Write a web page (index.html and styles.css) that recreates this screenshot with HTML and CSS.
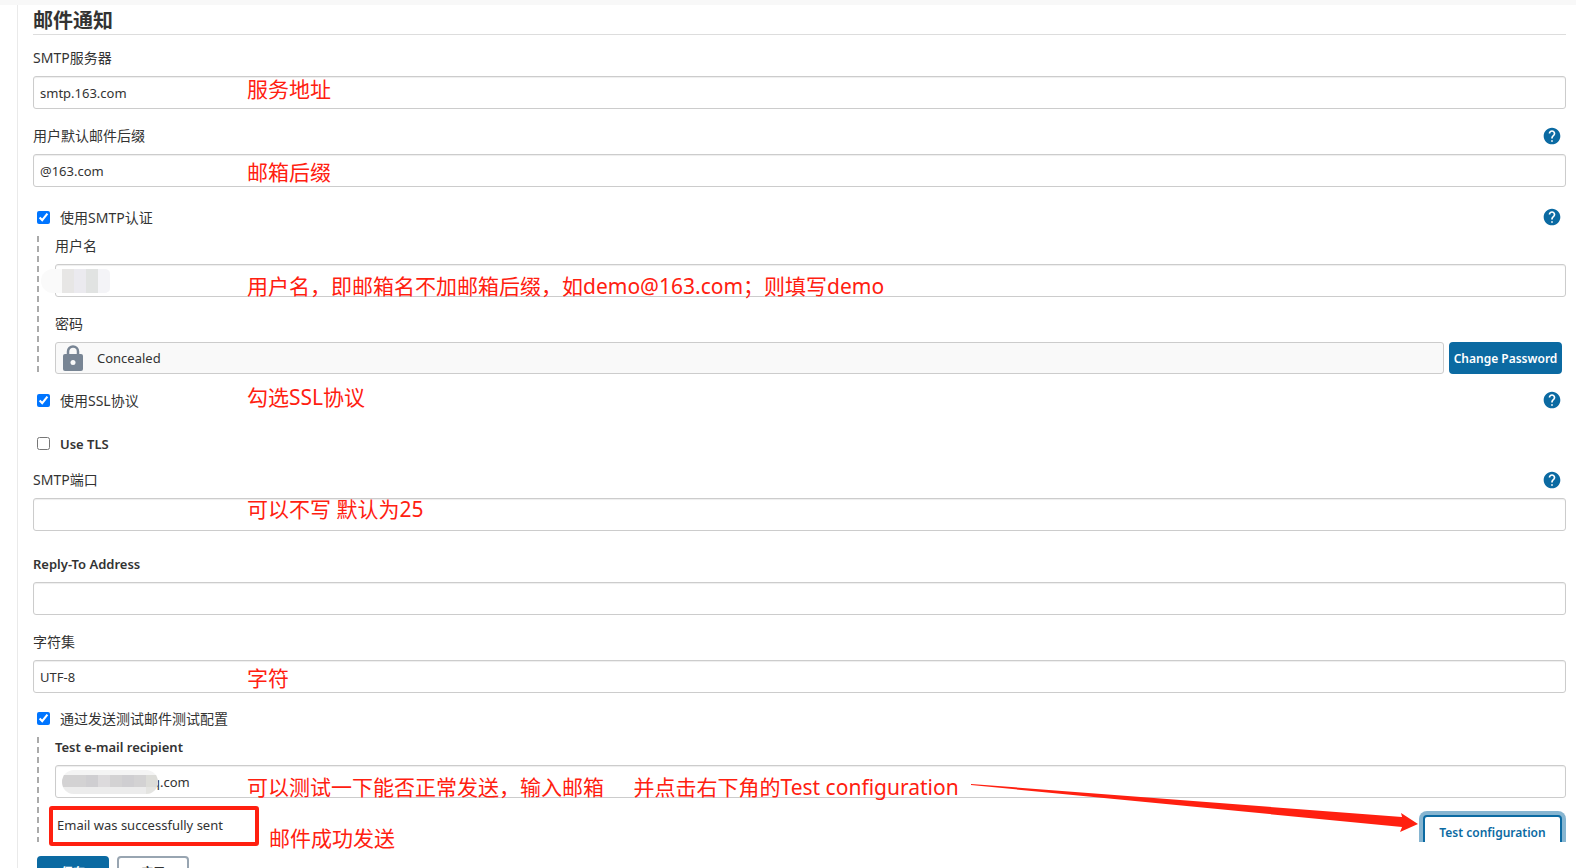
FILE: index.html
```
<!DOCTYPE html>
<html lang="zh-CN">
<head>
    <meta charset="UTF-8">
    <meta name="viewport" content="width=device-width, initial-scale=1.0">
    <title>邮件通知</title>
    <link rel="stylesheet" href="styles.css">
</head>
<body>

<svg class="sprite" aria-hidden="true">
    <symbol id="icon-help" viewBox="0 0 24 24">
        <path d="M12 2C6.48 2 2 6.48 2 12s4.48 10 10 10 10-4.48 10-10S17.52 2 12 2zm1 17h-2v-2h2v2zm2.07-7.75l-.9.92C13.45 12.9 13 13.5 13 15h-2v-.5c0-1.1.45-2.1 1.17-2.83l1.24-1.26c.37-.36.59-.86.59-1.41 0-1.1-.9-2-2-2s-2 .9-2 2H8c0-2.21 1.79-4 4-4s4 1.79 4 4c0 .88-.36 1.68-.93 2.25z"/>
    </symbol>
</svg>

<div class="topbar"></div>

<form class="config">
    <h2>邮件通知</h2>

    <div class="field">
        <div class="label-row"><label for="smtp-server">SMTP服务器</label></div>
        <input type="text" id="smtp-server" value="smtp.163.com">
        <span class="note">服务地址</span>
    </div>

    <div class="field">
        <div class="label-row">
            <label for="suffix">用户默认邮件后缀</label>
            <a class="help" href="#" aria-label="Help"><svg><use href="#icon-help"/></svg></a>
        </div>
        <input type="text" id="suffix" value="@163.com">
        <span class="note note-mid">邮箱后缀</span>
    </div>

    <div class="check-row">
        <input type="checkbox" id="use-auth" checked>
        <label for="use-auth">使用SMTP认证</label>
        <a class="help" href="#" aria-label="Help"><svg><use href="#icon-help"/></svg></a>
    </div>

    <div class="nested">
        <div class="field">
            <div class="label-row"><label for="username">用户名</label></div>
            <input type="text" id="username">
            <span class="mask mask-user"><i></i><i></i><i></i><i></i></span>
            <span class="note note-low">用户名，即邮箱名不加邮箱后缀，如demo@163.com；则填写demo</span>
        </div>
        <div class="field">
            <div class="label-row"><span>密码</span></div>
            <div class="secret-row">
                <div class="secret">
                    <svg viewBox="0 0 20 26">
                        <path d="M5 10V6.500a5 5 0 0 1 10 0V10" fill="none" stroke="#788594" stroke-width="2.500"/>
                        <rect x="0" y="9" width="20" height="17" rx="2" fill="#788594"/>
                        <circle cx="10" cy="17.500" r="2.500" fill="#f9f9f9"/>
                    </svg>
                    <span>Concealed</span>
                </div>
                <button type="button" class="btn-primary">Change Password</button>
            </div>
        </div>
    </div>

    <div class="check-row">
        <input type="checkbox" id="use-ssl" checked>
        <label for="use-ssl">使用SSL协议</label>
        <a class="help" href="#" aria-label="Help"><svg><use href="#icon-help"/></svg></a>
        <span class="note">勾选SSL协议</span>
    </div>

    <div class="check-row">
        <input type="checkbox" id="use-tls">
        <label for="use-tls" class="latin">Use TLS</label>
    </div>

    <div class="field field-port">
        <div class="label-row">
            <label for="port">SMTP端口</label>
            <a class="help" href="#" aria-label="Help"><svg><use href="#icon-help"/></svg></a>
        </div>
        <input type="text" id="port">
        <span class="note note-high">可以不写 默认为25</span>
    </div>

    <div class="field">
        <div class="label-row"><label for="reply-to" class="latin">Reply-To Address</label></div>
        <input type="text" id="reply-to">
    </div>

    <div class="field field-charset">
        <div class="label-row"><label for="charset">字符集</label></div>
        <input type="text" id="charset" value="UTF-8">
        <span class="note note-mid">字符</span>
    </div>

    <div class="check-row">
        <input type="checkbox" id="send-test" checked>
        <label for="send-test">通过发送测试邮件测试配置</label>
    </div>

    <div class="nested nested-test">
        <div class="field">
            <div class="label-row"><label for="recipient" class="latin">Test e-mail recipient</label></div>
            <input type="text" id="recipient" class="recipient" value="q.com">
            <span class="mask mask-mail"><i></i><i></i><i></i><i></i><i></i><i></i><i></i><i></i></span>
            <span class="note note-low">可以测试一下能否正常发送，输入邮箱 <span class="note-next">并点击右下角的Test configuration</span></span>
        </div>
        <div class="result-row">
            <span class="result">Email was successfully sent</span>
            <span class="note">邮件成功发送</span>
            <div class="test-clip">
                <button type="button" class="btn-test">Test configuration</button>
            </div>
        </div>
        <svg class="arrow" viewBox="0 0 448 50" preserveAspectRatio="none">
            <path d="M0 0L432 33L431 29L448 40L430 48L432 43L0 1Z" fill="#ff2010"/>
        </svg>
    </div>

    <div class="actions">
        <button type="submit" class="btn-save">保存</button>
        <button type="button" class="btn-apply">应用</button>
    </div>
</form>

</body>
</html>
```
FILE: styles.css
```
* {
    box-sizing: border-box;
}
html {
    overflow: hidden;
}
body {
    margin: 0;
    background: #fff;
    color: #333;
    font-family: "Noto Sans", "Noto Sans CJK SC", sans-serif;
    font-size: 14px;
    line-height: 20px;
}
.sprite {
    display: none;
}
.topbar {
    height: 5px;
    background: #f8f8f8;
}
.config {
    margin-left: 17px;
    padding: 0 10px 0 15px;
    border-left: 1px solid #eaeaea;
}
h2 {
    margin: 0 0 13px;
    height: 30px;
    line-height: 32px;
    border-bottom: 1px solid #ddd;
    font-size: 20px;
    font-weight: 700;
}

/* fields */
.field {
    position: relative;
    margin-bottom: 17px;
}
.field-port {
    margin-bottom: 23px;
}
.label-row {
    display: flex;
    align-items: center;
    justify-content: space-between;
    height: 20px;
    margin-bottom: 8px;
}
.latin {
    font-size: 13px;
    font-weight: 600;
}
input[type="text"] {
    display: block;
    width: 100%;
    height: 33px;
    padding: 0 6px;
    border: 1px solid #ccc;
    border-radius: 3px;
    box-shadow: inset 0 1px 1px rgba(0, 0, 0, 0.07);
    background: #fff;
    color: #333;
    font-family: inherit;
    font-size: 13px;
}
input.recipient {
    padding-left: 96px;
}
.check-row {
    position: relative;
    display: flex;
    align-items: center;
    height: 20px;
    margin: 0 0 23px 4px;
}
.check-row label {
    padding-top: 2px;
}
.field + .check-row {
    margin-top: 20px;
}
.field-charset {
    margin-bottom: 15px;
}
.field-charset + .check-row {
    margin-top: 0;
}
.check-row:has(+ .nested) {
    margin-bottom: 9px;
}
.check-row:has(+ .field) {
    margin-bottom: 17px;
}
input[type="checkbox"] {
    width: 13px;
    height: 13px;
    margin: 0 10px 0 0;
}
.help {
    display: flex;
    margin: 0 4px 0 auto;
    color: #0b6aa2;
}
.help svg {
    width: 20px;
    height: 20px;
    fill: currentColor;
}

/* block shown under a ticked box */
.nested {
    position: relative;
    margin: 0 0 16px 4px;
    padding-left: 18px;
}
.nested::before {
    content: "";
    position: absolute;
    left: 0;
    top: 0;
    bottom: 0;
    width: 2px;
    background: repeating-linear-gradient(#aaa 0 6px, transparent 6px 10px);
}
.nested .field:last-child {
    margin-bottom: 0;
}
.nested-test {
    margin-bottom: 14px;
}
.secret-row {
    display: flex;
    gap: 5px;
    height: 32px;
    margin-right: 4px;
}
.secret {
    display: flex;
    flex: 1;
    align-items: center;
    gap: 14px;
    padding: 0 7px;
    border: 1px solid #ccc;
    border-radius: 3px;
    background: #f9f9f9;
    font-size: 13px;
}
.secret svg {
    width: 20px;
    height: 26px;
}

/* buttons */
button {
    border: 2px solid #0b6aa2;
    border-radius: 4px;
    font-family: inherit;
    font-size: 12px;
    font-weight: 600;
}
.btn-primary {
    width: 113px;
    padding: 0;
    background: #0b6aa2;
    color: #fff;
    white-space: nowrap;
}
.test-clip {
    height: 31px;
    margin: 5px 0 0 auto;
    padding: 4px 4px 0;
    overflow: hidden;
}
.btn-test {
    width: 139px;
    height: 34px;
    padding: 0;
    background: #fff;
    box-shadow: 0 0 0 4px #86b5d1;
    color: #0b6aa2;
}
.actions {
    display: flex;
    gap: 8px;
    margin-left: 4px;
}
.actions button {
    width: 72px;
    height: 32px;
}
.btn-save {
    background: #0b6aa2;
    color: #fff;
}
.btn-apply {
    border-color: #98a5b1;
    background: #fff;
    color: #333;
}

/* red remarks */
.note {
    position: absolute;
    left: 214px;
    bottom: 5px;
    color: #ff2010;
    font-size: 21px;
    line-height: 30px;
    white-space: nowrap;
    pointer-events: none;
}
.note-high {
    bottom: 7px;
}
.note-mid {
    bottom: 0;
}
.note-low {
    bottom: -4px;
}
.nested .note {
    left: 192px;
}
.check-row .note {
    left: 210px;
    bottom: -2px;
}
.note-next {
    margin-left: 24px;
}
.result-row {
    position: relative;
    display: flex;
    align-items: flex-start;
    margin-top: -9px;
}
.result {
    width: 210px;
    height: 40px;
    margin: 0 0 -5px -6px;
    padding: 5px 4px;
    border: 4px solid #ff2010;
    border-radius: 3px;
    font-size: 13px;
}
.nested .result-row .note {
    left: 214px;
    bottom: -11px;
}
.arrow {
    position: absolute;
    left: 934px;
    top: 47px;
    width: calc(100% - 1082px);
    height: 50px;
}

/* blurred-out account names */
.mask {
    position: absolute;
    display: flex;
    overflow: hidden;
}
.mask i {
    width: 12px;
}
.mask-user {
    left: -14px;
    bottom: 4px;
    height: 24px;
    padding-left: 21px;
    border-radius: 12px 5px 5px 12px;
    background: #fafafa;
}
.mask-user i {
    background: #e7e6e5;
}
.mask-user i:nth-child(2) {
    background: #ebeaef;
}
.mask-user i:nth-child(3) {
    background: #e1e3e2;
}
.mask-user i:nth-child(4) {
    background: #f4f4f7;
}
.mask-mail {
    left: 7px;
    bottom: 4px;
    height: 24px;
    border-radius: 12px;
    background: #f4f4f4;
}
.mask-mail i {
    height: 12px;
    margin-top: 5px;
    background: #d3d2d3;
    box-shadow: 0 12px #ececec;
}
.mask-mail i:nth-child(3n) {
    background: #cfced1;
}
.mask-mail i:nth-child(4) {
    background: #dcdadc;
}
.mask-mail i:nth-child(8) {
    background: #dcdcd8;
    box-shadow: 0 12px #e4e4e1;
}
```
